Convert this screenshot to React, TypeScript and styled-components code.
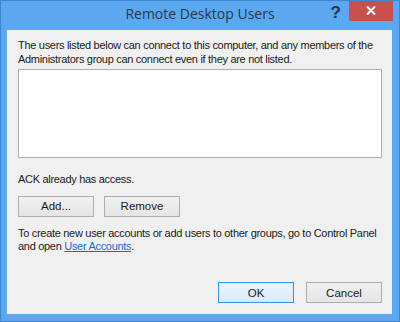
import React from 'react'
import styled, { createGlobalStyle } from 'styled-components'

const GlobalStyle = createGlobalStyle`
  html, body {
    margin: 0;
    padding: 0;
    background: #ffffff;
  }
  body {
    font-family: 'Liberation Sans', Arial, sans-serif;
  }
`

const Window = styled.div`
  width: 400px;
  height: 322px;
  box-sizing: border-box;
  background: #5ba8f0;
  border: 1px solid #3d86cf;
  display: flex;
  flex-direction: column;
  overflow: hidden;
`

const TitleBar = styled.div`
  position: relative;
  height: 29px;
  display: flex;
  align-items: center;
  justify-content: center;
  flex-shrink: 0;
`

const Title = styled.div`
  font-family: 'Open Sans', 'Noto Sans', sans-serif;
  font-size: 14px;
  color: #26384c;
  margin-top: -5px;
`

const HelpButton = styled.div`
  position: absolute;
  right: 58px;
  top: 2px;
  font-size: 17px;
  font-weight: 700;
  color: #1e3550;
`

const CloseButton = styled.div`
  position: absolute;
  right: 6px;
  top: -1px;
  width: 44px;
  height: 21px;
  background: #c9504f;
  color: #ffffff;
  display: flex;
  align-items: center;
  justify-content: center;
`

const Body = styled.div`
  flex: 1;
  margin: 0 7px 7px 6px;
  background: #f0f0f0;
  padding: 9px 10px 11px 11px;
  display: flex;
  flex-direction: column;
  font-size: 11px;
  line-height: 13.5px;
  color: #1a1a1a;
`

const Paragraph = styled.p<{ $gap?: number }>`
  margin: ${p => p.$gap ?? 0}px 0 0 0;
  letter-spacing: -0.3px;
  white-space: nowrap;
`

const UserList = styled.div`
  margin-top: 3px;
  height: 89px;
  background: #ffffff;
  border: 1px solid #abadb3;
  box-sizing: border-box;
`

const ButtonRow = styled.div<{ $end?: boolean }>`
  display: flex;
  gap: ${p => (p.$end ? 12 : 10)}px;
  justify-content: ${p => (p.$end ? 'flex-end' : 'flex-start')};
  margin-top: ${p => (p.$end ? 'auto' : '9px')};
`

const Button = styled.button<{ $default?: boolean }>`
  width: 76px;
  height: 21px;
  padding: 0;
  box-sizing: border-box;
  font-family: inherit;
  font-size: 11.5px;
  color: #1a1a1a;
  border: 1px solid ${p => (p.$default ? '#3c97e6' : '#adadad')};
  background: ${p =>
    p.$default
      ? 'linear-gradient(#eaf4fc, #dcecfc)'
      : 'linear-gradient(#f0f0f0, #e5e5e5)'};
  box-shadow: ${p => (p.$default ? 'inset 0 0 0 1px #d6e9fb' : 'none')};
`

const Link = styled.a`
  color: #0d6fd1;
  text-decoration: underline;
`

export default function App() {
  return (
    <>
      <GlobalStyle />
      <Window>
        <TitleBar>
          <Title>Remote Desktop Users</Title>
          <HelpButton>?</HelpButton>
          <CloseButton>
            <svg width="10" height="9" viewBox="0 0 10 9">
              <path d="M1 0.5 L9 8.5 M9 0.5 L1 8.5" stroke="#ffffff" strokeWidth="2" />
            </svg>
          </CloseButton>
        </TitleBar>
        <Body>
          <Paragraph>
            The users listed below can connect to this computer, and any members of the
            <br />
            Administrators group can connect even if they are not listed.
          </Paragraph>
          <UserList />
          <Paragraph $gap={15}>ACK already has access.</Paragraph>
          <ButtonRow>
            <Button>Add...</Button>
            <Button>Remove</Button>
          </ButtonRow>
          <Paragraph $gap={10}>
            To create new user accounts or add users to other groups, go to Control Panel
            <br />
            and open <Link>User Accounts</Link>.
          </Paragraph>
          <ButtonRow $end>
            <Button $default>OK</Button>
            <Button>Cancel</Button>
          </ButtonRow>
        </Body>
      </Window>
    </>
  )
}
